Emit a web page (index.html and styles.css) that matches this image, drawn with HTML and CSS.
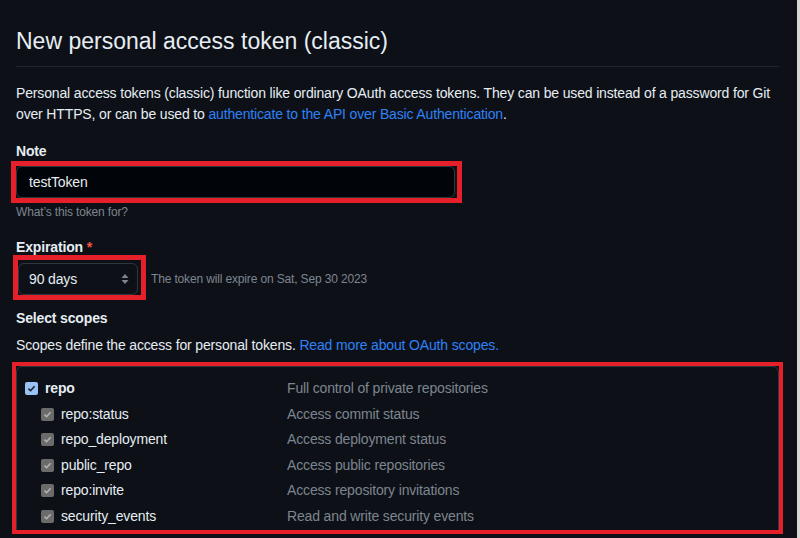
FILE: index.html
```html
<!DOCTYPE html>
<html lang="en">
<head>
<meta charset="utf-8">
<title>New personal access token (classic)</title>
<link rel="stylesheet" href="styles.css">
</head>
<body>
<main class="page">
  <h1 class="title">New personal access token (classic)</h1>
  <p class="intro">Personal access tokens (classic) function like ordinary OAuth access tokens. They can be used instead of a password for Git<br>over HTTPS, or can be used to <a href="#">authenticate to the API over Basic Authentication</a>.</p>

  <div class="field">
    <div class="label">Note</div>
    <div class="mark mark-note"><div class="input">testToken</div></div>
    <div class="hint">What’s this token for?</div>
  </div>

  <div class="field">
    <div class="label">Expiration <span class="req">*</span></div>
    <div class="exp-row">
      <div class="mark mark-select">
        <div class="select">
          <span>90 days</span>
          <svg class="arrows" width="8" height="12" viewBox="0 0 8 12"><path d="M4 1 L7.5 5 H0.5 Z M4 11 L7.5 7 H0.5 Z" fill="#7d8590"/></svg>
        </div>
      </div>
      <span class="exp-note">The token will expire on Sat, Sep 30 2023</span>
    </div>
  </div>

  <div class="field field-scopes">
    <div class="label">Select scopes</div>
    <p class="scopes-desc">Scopes define the access for personal tokens. <a href="#">Read more about OAuth scopes.</a></p>
    <div class="mark mark-scopes">
      <div class="scope-box">
        <div class="row parent">
          <span class="cb cb-on"><svg width="9" height="9" viewBox="0 0 9 9"><path d="M1.5 4.6 L3.6 6.7 L7.6 2.2" stroke="#1b1f24" stroke-width="1.6" fill="none"/></svg></span>
          <span class="name">repo</span>
          <span class="desc">Full control of private repositories</span>
        </div>
        <div class="row child">
          <span class="cb cb-dis"><svg width="9" height="9" viewBox="0 0 9 9"><path d="M1.5 4.6 L3.6 6.7 L7.6 2.2" stroke="#b3b3b3" stroke-width="1.6" fill="none"/></svg></span>
          <span class="name">repo:status</span>
          <span class="desc">Access commit status</span>
        </div>
        <div class="row child">
          <span class="cb cb-dis"><svg width="9" height="9" viewBox="0 0 9 9"><path d="M1.5 4.6 L3.6 6.7 L7.6 2.2" stroke="#b3b3b3" stroke-width="1.6" fill="none"/></svg></span>
          <span class="name">repo_deployment</span>
          <span class="desc">Access deployment status</span>
        </div>
        <div class="row child">
          <span class="cb cb-dis"><svg width="9" height="9" viewBox="0 0 9 9"><path d="M1.5 4.6 L3.6 6.7 L7.6 2.2" stroke="#b3b3b3" stroke-width="1.6" fill="none"/></svg></span>
          <span class="name">public_repo</span>
          <span class="desc">Access public repositories</span>
        </div>
        <div class="row child">
          <span class="cb cb-dis"><svg width="9" height="9" viewBox="0 0 9 9"><path d="M1.5 4.6 L3.6 6.7 L7.6 2.2" stroke="#b3b3b3" stroke-width="1.6" fill="none"/></svg></span>
          <span class="name">repo:invite</span>
          <span class="desc">Access repository invitations</span>
        </div>
        <div class="row child">
          <span class="cb cb-dis"><svg width="9" height="9" viewBox="0 0 9 9"><path d="M1.5 4.6 L3.6 6.7 L7.6 2.2" stroke="#b3b3b3" stroke-width="1.6" fill="none"/></svg></span>
          <span class="name">security_events</span>
          <span class="desc">Read and write security events</span>
        </div>
      </div>
    </div>
  </div>
</main>
</body>
</html>
```

FILE: styles.css
```css
* { box-sizing: border-box; }
html, body { margin: 0; padding: 0; }
body {
  background: #0d1117;
  color: #e6edf3;
  font-family: "Liberation Sans", Arial, sans-serif;
  font-size: 14px;
  line-height: 21px;
  letter-spacing: -0.15px;
  overflow: hidden;
  height: 538px;
  border-right: 3px solid #d6d6d6;
}
.page {
  padding: 24px 18px 0 16px;
}
a { color: #2f81f7; text-decoration: none; }

.title {
  margin: 0;
  font-size: 23px;
  font-weight: 400;
  letter-spacing: 0;
  line-height: 34px;
  padding-bottom: 8px;
  border-bottom: 1px solid #21262d;
}
.intro {
  margin: 16px 0 0;
  white-space: nowrap;
}
.field { margin-top: 16px; }
.field-scopes { margin-top: 13px; }
.label { font-weight: 700; }
.req { color: #f85149; }

.mark { outline: 5px solid #e5202b; }
.mark-note {
  margin-top: 4px;
  width: 441px;
  padding-right: 2px;
}
.input {
  height: 32px;
  width: 439px;
  background: #010409;
  border: 1px solid #30363d;
  border-radius: 6px;
  padding: 0 12px;
  line-height: 30px;
  font-size: 14px;
}
.hint {
  font-size: 12px;
  line-height: 18px;
  color: #7d8590;
  margin-top: 5px;
}

.exp-row {
  display: flex;
  align-items: flex-end;
  gap: 10px;
  margin-top: 5px;
}
.mark-select {
  padding: 3px 3px 0 0;
  margin-left: 2px;
  margin-top: -3px;
}
.select {
  width: 120px;
  height: 32px;
  border: 1px solid #30363d;
  border-radius: 6px;
  background: #0d1117;
  display: flex;
  align-items: center;
  justify-content: space-between;
  padding: 0 8px 0 10px;
}
.exp-note {
  font-size: 12px;
  line-height: 18px;
  color: #7d8590;
  padding-bottom: 7px;
}

.scopes-desc { margin: 6px 0 0; }
.mark-scopes {
  margin-top: 10px;
  height: 164px;
  overflow: hidden;
  outline-width: 4px;
}
.scope-box {
  border: 1px solid #30363d;
  border-radius: 6px;
  padding: 9px 0 40px 8px;
}
.row {
  display: flex;
  align-items: center;
  height: 25.5px;
}
.row .cb {
  width: 13px;
  height: 13px;
  border-radius: 2px;
  display: inline-flex;
  align-items: center;
  justify-content: center;
  flex: none;
}
.cb-on { background: #99c3f5; }
.cb-dis { background: #6b6b6b; }
.row .name { margin-left: 7px; }
.parent .name { font-weight: 700; width: 242px; }
.child { padding-left: 16px; }
.child .name { width: 226px; }
.desc { color: #7d8590; }
```
